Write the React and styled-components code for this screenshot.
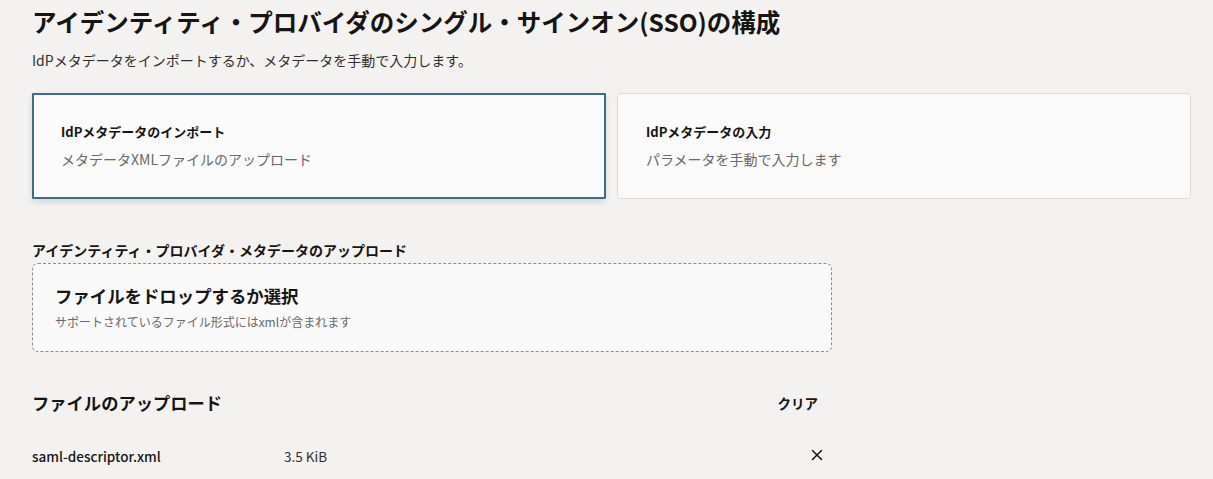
import React, { useState } from "react";
import styled, { createGlobalStyle } from "styled-components";

const GlobalStyle = createGlobalStyle`
  html, body {
    margin: 0;
    padding: 0;
    background: #f3f2f1;
  }
  body {
    font-family: "Noto Sans CJK JP", "Noto Sans", "Liberation Sans", sans-serif;
    color: #161513;
  }
`;

const Page = styled.div`
  padding: 6px 22px 0 32px;
  height: 479px;
  box-sizing: border-box;
  overflow: hidden;
`;

const Title = styled.h1`
  margin: 0;
  font-size: 24.5px;
  line-height: 32px;
  font-weight: 700;
`;

const Lead = styled.p`
  margin: 12px 0 0;
  font-size: 14px;
  line-height: 20px;
  color: #312f2d;
`;

const CardGrid = styled.div`
  display: grid;
  grid-template-columns: 1fr 1fr;
  gap: 11px;
  margin-top: 23px;
`;

const OptionCard = styled.button`
  display: flex;
  flex-direction: column;
  align-items: flex-start;
  gap: 7px;
  text-align: left;
  font-family: inherit;
  background: #fafafa;
  box-sizing: border-box;
  height: 106px;
  cursor: pointer;
  border: ${(p) => (p.selected ? "2px solid #3d6c89" : "1px solid #dddbd8")};
  padding: ${(p) => (p.selected ? "27px 27px" : "28px 28px")};
  border-radius: ${(p) => (p.selected ? "1px" : "4px")};
  box-shadow: ${(p) => (p.selected ? "0 3px 6px rgba(0,0,0,0.12)" : "none")};
`;

const CardTitle = styled.span`
  font-size: 13px;
  line-height: 20px;
  font-weight: 700;
  color: #161513;
`;

const CardText = styled.span`
  font-size: 14px;
  line-height: 20px;
  color: #6b6865;
`;

const SectionLabel = styled.div`
  margin-top: 42px;
  font-size: 14px;
  line-height: 18px;
  font-weight: 700;
`;

const DropZone = styled.div`
  margin-top: 4px;
  width: 800px;
  box-sizing: border-box;
  height: 89px;
  border: 1px dashed #8f8c89;
  border-radius: 6px;
  background: #f9f9f9;
  padding: 20px 22px 0;
`;

const DropTitle = styled.div`
  font-size: 17.4px;
  line-height: 24px;
  font-weight: 700;
`;

const DropHint = styled.div`
  margin-top: 6px;
  font-size: 12px;
  line-height: 16px;
  color: #6b6865;
`;

const FileList = styled.div`
  width: 800px;
  margin-top: 39px;
`;

const ListHeader = styled.div`
  display: flex;
  justify-content: space-between;
  align-items: center;
  padding-right: 14px;
`;

const ListTitle = styled.h2`
  margin: 0;
  font-size: 17.3px;
  line-height: 24px;
  font-weight: 700;
`;

const ClearButton = styled.button`
  background: none;
  border: none;
  padding: 0;
  font-family: inherit;
  font-size: 13.5px;
  font-weight: 700;
  color: #161513;
  cursor: pointer;
`;

const FileRow = styled.div`
  display: flex;
  align-items: center;
  margin-top: 31px;
  height: 20px;
  padding-right: 9px;
`;

const FileName = styled.span`
  width: 252px;
  font-size: 13.5px;
  font-weight: 500;
`;

const FileSize = styled.span`
  flex: 1;
  font-size: 13.5px;
  color: #312f2d;
`;

const RemoveButton = styled.button`
  background: none;
  border: none;
  padding: 0;
  display: flex;
  cursor: pointer;
  margin-top: -2px;
`;

const CloseIcon = () => (
  <svg width="12" height="12" viewBox="0 0 12 12">
    <path d="M1.5 1.5 L10.5 10.5 M10.5 1.5 L1.5 10.5" stroke="#161513" strokeWidth="1.5" strokeLinecap="round" />
  </svg>
);

const options = [
  { id: "import", title: "IdPメタデータのインポート", text: "メタデータXMLファイルのアップロード" },
  { id: "manual", title: "IdPメタデータの入力", text: "パラメータを手動で入力します" },
];

const App = () => {
  const [mode, setMode] = useState("import");

  return (
    <>
      <GlobalStyle />
      <Page>
        <Title>アイデンティティ・プロバイダのシングル・サインオン(SSO)の構成</Title>
        <Lead>IdPメタデータをインポートするか、メタデータを手動で入力します。</Lead>
        <CardGrid>
          {options.map((o) => (
            <OptionCard key={o.id} selected={mode === o.id} onClick={() => setMode(o.id)}>
              <CardTitle>{o.title}</CardTitle>
              <CardText>{o.text}</CardText>
            </OptionCard>
          ))}
        </CardGrid>
        <SectionLabel>アイデンティティ・プロバイダ・メタデータのアップロード</SectionLabel>
        <DropZone>
          <DropTitle>ファイルをドロップするか選択</DropTitle>
          <DropHint>サポートされているファイル形式にはxmlが含まれます</DropHint>
        </DropZone>
        <FileList>
          <ListHeader>
            <ListTitle>ファイルのアップロード</ListTitle>
            <ClearButton>クリア</ClearButton>
          </ListHeader>
          <FileRow>
            <FileName>saml-descriptor.xml</FileName>
            <FileSize>3.5 KiB</FileSize>
            <RemoveButton aria-label="削除">
              <CloseIcon />
            </RemoveButton>
          </FileRow>
        </FileList>
      </Page>
    </>
  );
};

export default App;
